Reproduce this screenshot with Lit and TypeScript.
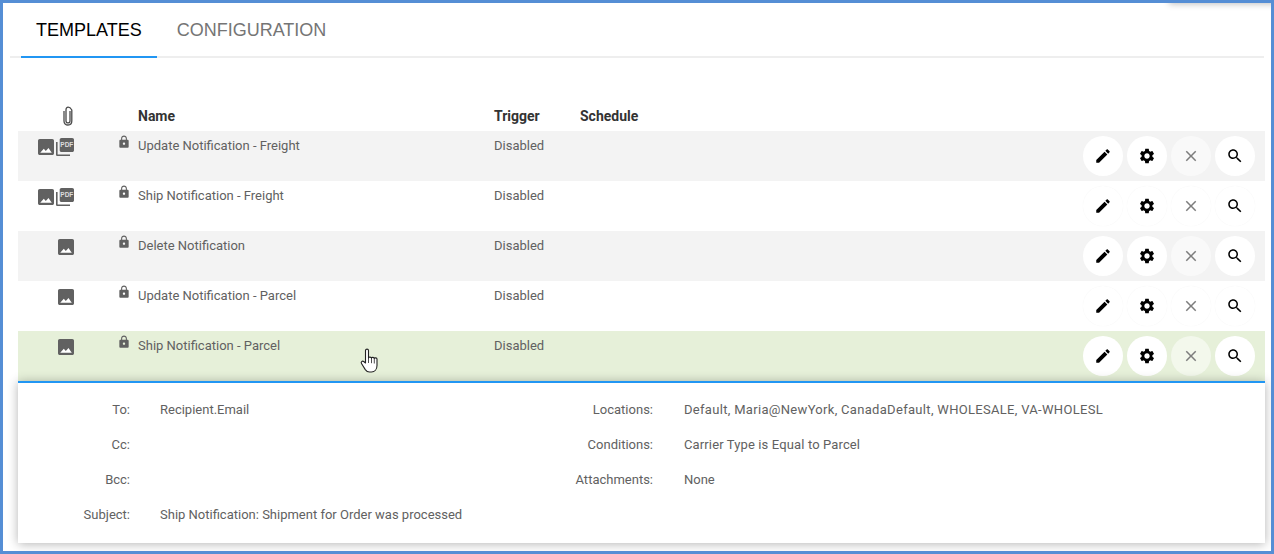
import { LitElement, html, css, svg } from 'lit';
import { customElement } from 'lit/decorators.js';

const imageIcon = svg`<svg class="ico" width="16" height="16" viewBox="3 3 18 18"><path fill="#616161" d="M21 19V5c0-1.100-.9-2-2-2H5c-1.100 0-2 .9-2 2v14c0 1.100.9 2 2 2h14c1.100 0 2-.9 2-2z"/><path fill="#fff" d="M5.500 18.500l4-4.500 2.300 2.400 3-3.400 3.700 5.500z"/></svg>`;
const pdfIcon = html`<svg class="ico pdf" width="18" height="18" viewBox="0 0 18 18"><path fill="#616161" d="M5.500 0h10.700c1 0 1.800.8 1.800 1.800v10.400c0 1-.8 1.800-1.800 1.800H5.500c-1 0-1.800-.8-1.800-1.800V1.800c0-1 .8-1.800 1.800-1.800z"/><path fill="#616161" d="M0 4h1.600v12.400H14V18H1.600C.7 18 0 17.300 0 16.400z"/><text x="10.800" y="8.800" text-anchor="middle" class="pdf-label">PDF</text></svg>`;
const lockIcon = svg`<svg class="lock" width="14" height="14" viewBox="0 0 24 24"><path fill="#616161" d="M18 8h-1V6c0-2.760-2.240-5-5-5S7 3.240 7 6v2H6c-1.100 0-2 .9-2 2v10c0 1.100.9 2 2 2h12c1.100 0 2-.9 2-2V10c0-1.100-.9-2-2-2zm-6 9c-1.100 0-2-.9-2-2s.9-2 2-2 2 .9 2 2-.9 2-2 2zm3.100-9H8.900V6c0-1.710 1.390-3.100 3.100-3.100 1.710 0 3.100 1.390 3.100 3.100z"/></svg>`;
const paperclip = svg`<svg width="12" height="20" viewBox="0 0 12 20"><path fill="none" stroke="#4a4a4a" stroke-width="1.300" d="M8 5v10c0 1.200-.8 1.900-2 1.900S4 16.200 4 15V4c0-1.700.8-2.800 2.200-2.800S8.800 2.300 9.800 4v11c0 2.500-1.500 4-3.800 4S2 17.500 2 15V5"/></svg>`;

const editIcon = svg`<svg width="18" height="18" viewBox="0 0 24 24"><path d="M3 17.250V21h3.750L17.810 9.940l-3.750-3.750L3 17.250zM20.710 7.040c.39-.39.39-1.020 0-1.410l-2.340-2.340c-.39-.39-1.020-.39-1.410 0l-1.830 1.830 3.750 3.750 1.830-1.830z"/></svg>`;
const gearIcon = svg`<svg width="18" height="18" viewBox="0 0 24 24"><path d="M19.140 12.940c.04-.3.060-.61.060-.94 0-.32-.02-.64-.07-.94l2.030-1.580c.18-.14.230-.41.120-.61l-1.920-3.320c-.12-.22-.37-.29-.59-.22l-2.390.96c-.5-.38-1.030-.7-1.620-.94l-.36-2.540c-.04-.24-.24-.41-.48-.41h-3.840c-.24 0-.43.170-.47.410l-.36 2.540c-.59.24-1.130.57-1.620.94l-2.390-.96c-.22-.08-.47 0-.59.22L2.740 8.870c-.12.210-.08.470.12.610l2.030 1.580c-.05.3-.09.630-.09.940s.02.640.07.940l-2.030 1.580c-.18.140-.23.410-.12.610l1.920 3.320c.12.220.37.290.59.220l2.390-.96c.5.380 1.030.7 1.620.94l.36 2.540c.05.240.24.410.48.410h3.840c.24 0 .44-.17.470-.41l.36-2.540c.59-.24 1.130-.56 1.620-.94l2.390.96c.22.080.47 0 .59-.22l1.920-3.320c.12-.22.070-.47-.12-.61l-2.010-1.580zM12 15.600c-1.980 0-3.600-1.620-3.600-3.600s1.620-3.600 3.600-3.600 3.600 1.620 3.600 3.600-1.620 3.600-3.600 3.600z"/></svg>`;
const closeIcon = svg`<svg width="18" height="18" viewBox="0 0 24 24"><path fill="#7d7d7d" d="M19 6.410L17.590 5 12 10.590 6.410 5 5 6.410 10.590 12 5 17.590 6.410 19 12 13.410 17.590 19 19 17.590 13.410 12z"/></svg>`;
const searchIcon = svg`<svg width="18" height="18" viewBox="0 0 24 24"><path d="M15.500 14h-.79l-.28-.27C15.410 12.590 16 11.110 16 9.500 16 5.910 13.090 3 9.500 3S3 5.910 3 9.500 5.910 16 9.500 16c1.610 0 3.090-.59 4.230-1.570l.27.28v.79l5 4.990L20.490 19l-4.990-5zm-6 0C7.010 14 5 11.990 5 9.500S7.010 5 9.500 5 14 7.010 14 9.500 11.990 14 9.500 14z"/></svg>`;

const rows = [
  { name: 'Update Notification - Freight', pdf: true, cls: 'odd' },
  { name: 'Ship Notification - Freight', pdf: true, cls: 'even' },
  { name: 'Delete Notification', pdf: false, cls: 'odd' },
  { name: 'Update Notification - Parcel', pdf: false, cls: 'even' },
  { name: 'Ship Notification - Parcel', pdf: false, cls: 'active' },
];

const details = [
  ['To:', 'Recipient.Email', 'Locations:', 'Default, Maria@NewYork, CanadaDefault, WHOLESALE, VA-WHOLESL', 'wide'],
  ['Cc:', '', 'Conditions:', 'Carrier Type is Equal to Parcel', 'mid'],
  ['Bcc:', '', 'Attachments:', 'None', ''],
  ['Subject:', 'Ship Notification: Shipment for Order was processed', '', '', ''],
];

@customElement('app-root')
export class AppRoot extends LitElement {
  static styles = css`
    :host {
      display: block;
      width: 1274px;
      height: 554px;
      box-sizing: border-box;
      border: 3px solid #558ed5;
      background: #fff;
      position: relative;
      overflow: hidden;
      font-family: Roboto, sans-serif;
      font-size: 13px;
      color: #616161;
    }
    .corner-shadow {
      position: absolute;
      top: -12px;
      right: -10px;
      width: 112px;
      height: 12px;
      box-shadow: 0 1px 6px rgba(0, 0, 0, 0.25);
    }
    .tabs {
      display: flex;
      margin: 0 7px;
      height: 53px;
      border-bottom: 2px solid #eee;
      padding-left: 11px;
      font-family: 'Liberation Sans', sans-serif;
      font-size: 18px;
    }
    .tab {
      height: 55px;
      box-sizing: border-box;
      padding: 17px 15px 0;
      line-height: 20px;
      color: #757575;
    }
    .tab.on {
      color: #000;
      border-bottom: 2px solid #2196f3;
    }
    .tab + .tab { padding-left: 20px; }
    .table { margin: 0 6px 0 15px; }
    .head, .row {
      display: grid;
      grid-template-columns: 120px 356px 86px 1fr;
    }
    .head {
      height: 42px;
      margin-top: 31px;
      align-items: end;
      padding-bottom: 7px;
      box-sizing: border-box;
      font-weight: 700;
      color: #333;
      font-size: 14px;
      line-height: 16px;
    }
    .head .clip {
      height: 16px;
      display: flex;
      padding-left: 44px;
      align-items: center;
    }
    .row {
      height: 50px;
      line-height: 16px;
    }
    .row.odd { background: #f3f3f3; }
    .row.active { background: #e6f0d9; }
    .cell-top { padding-top: 7px; }
    .icons { display: flex; }
    .types {
      width: 56px;
      display: flex;
      justify-content: flex-end;
      gap: 2px;
      padding-top: 8px;
    }
    .ico { display: block; }
    .ico.pdf { margin-top: -1px; }
    .pdf-label {
      font-family: 'Liberation Sans', sans-serif;
      font-size: 6.500px;
      font-weight: 700;
      fill: #ddd;
    }
    .lock {
      display: block;
      margin: 4px 0 0 43px;
    }
    .actions {
      display: flex;
      justify-content: flex-end;
      gap: 4px;
      padding: 5px 10px 0 0;
    }
    .btn {
      width: 40px;
      height: 40px;
      border-radius: 50%;
      background: #fff;
      display: flex;
      align-items: center;
      justify-content: center;
    }
    .even .btn { box-shadow: 0 0 1px rgba(0, 0, 0, 0.06); }
    .btn.off { background: rgba(255, 255, 255, 0.5); }
    .even .btn.off { background: #fff; }
    .panel {
      position: relative;
      height: 162px;
      box-sizing: border-box;
      border-top: 2px solid #2196f3;
      background: #fff;
      box-shadow: 0 1px 10px rgba(0, 0, 0, 0.3);
      padding-top: 9px;
      display: grid;
      grid-template-columns: 112px 300px 223px 1fr;
      grid-auto-rows: 35px;
      line-height: 35px;
    }
    .label { text-align: right; }
    .value { padding-left: 30px; white-space: nowrap; }
    .value.second { padding-left: 31px; }
    .value.wide { letter-spacing: 0.31px; }
    .value.mid { letter-spacing: 0.13px; }
    .cursor {
      position: absolute;
      left: 357px;
      top: 345px;
    }
  `;

  render() {
    return html`
      <div class="corner-shadow"></div>
      <div class="tabs">
        <div class="tab on">TEMPLATES</div>
        <div class="tab">CONFIGURATION</div>
      </div>
      <div class="table">
        <div class="head">
          <div class="clip">${paperclip}</div>
          <div>Name</div>
          <div>Trigger</div>
          <div>Schedule</div>
        </div>
        ${rows.map(r => html`
          <div class="row ${r.cls}">
            <div class="icons">
              <div class="types">${imageIcon}${r.pdf ? pdfIcon : ''}</div>
              ${lockIcon}
            </div>
            <div class="cell-top">${r.name}</div>
            <div class="cell-top">Disabled</div>
            <div class="actions">
              <div class="btn">${editIcon}</div>
              <div class="btn">${gearIcon}</div>
              <div class="btn off">${closeIcon}</div>
              <div class="btn">${searchIcon}</div>
            </div>
          </div>
        `)}
        <div class="panel">
          ${details.map(d => html`
            <div class="label">${d[0]}</div>
            <div class="value">${d[1]}</div>
            <div class="label">${d[2]}</div>
            <div class="value second ${d[4]}">${d[3]}</div>
          `)}
        </div>
      </div>
      <svg class="cursor" width="20" height="27" viewBox="0 0 20 27">
        <path fill="#fff" stroke="#222" stroke-width="1.100" stroke-linejoin="round" d="M5.500 2.500c0-1.800 3-1.800 3 0V10c0-1.200 3-1.200 3 .2 0-1.200 2.800-1 2.800.3 0-1 2.700-.8 2.700.5v6.500c0 4-2.500 6.500-5.500 6.500H9.500c-2 0-3.200-1-4.200-2.400L1.500 15.500c-1-1.500.8-3 2.200-2L5.500 15z"/>
        <path fill="none" stroke="#222" stroke-width=".8" d="M8.500 10v5M11.500 10.200v5M14.300 10.500v5"/>
      </svg>
    `;
  }
}

declare global {
  interface HTMLElementTagNameMap {
    'app-root': AppRoot;
  }
}
